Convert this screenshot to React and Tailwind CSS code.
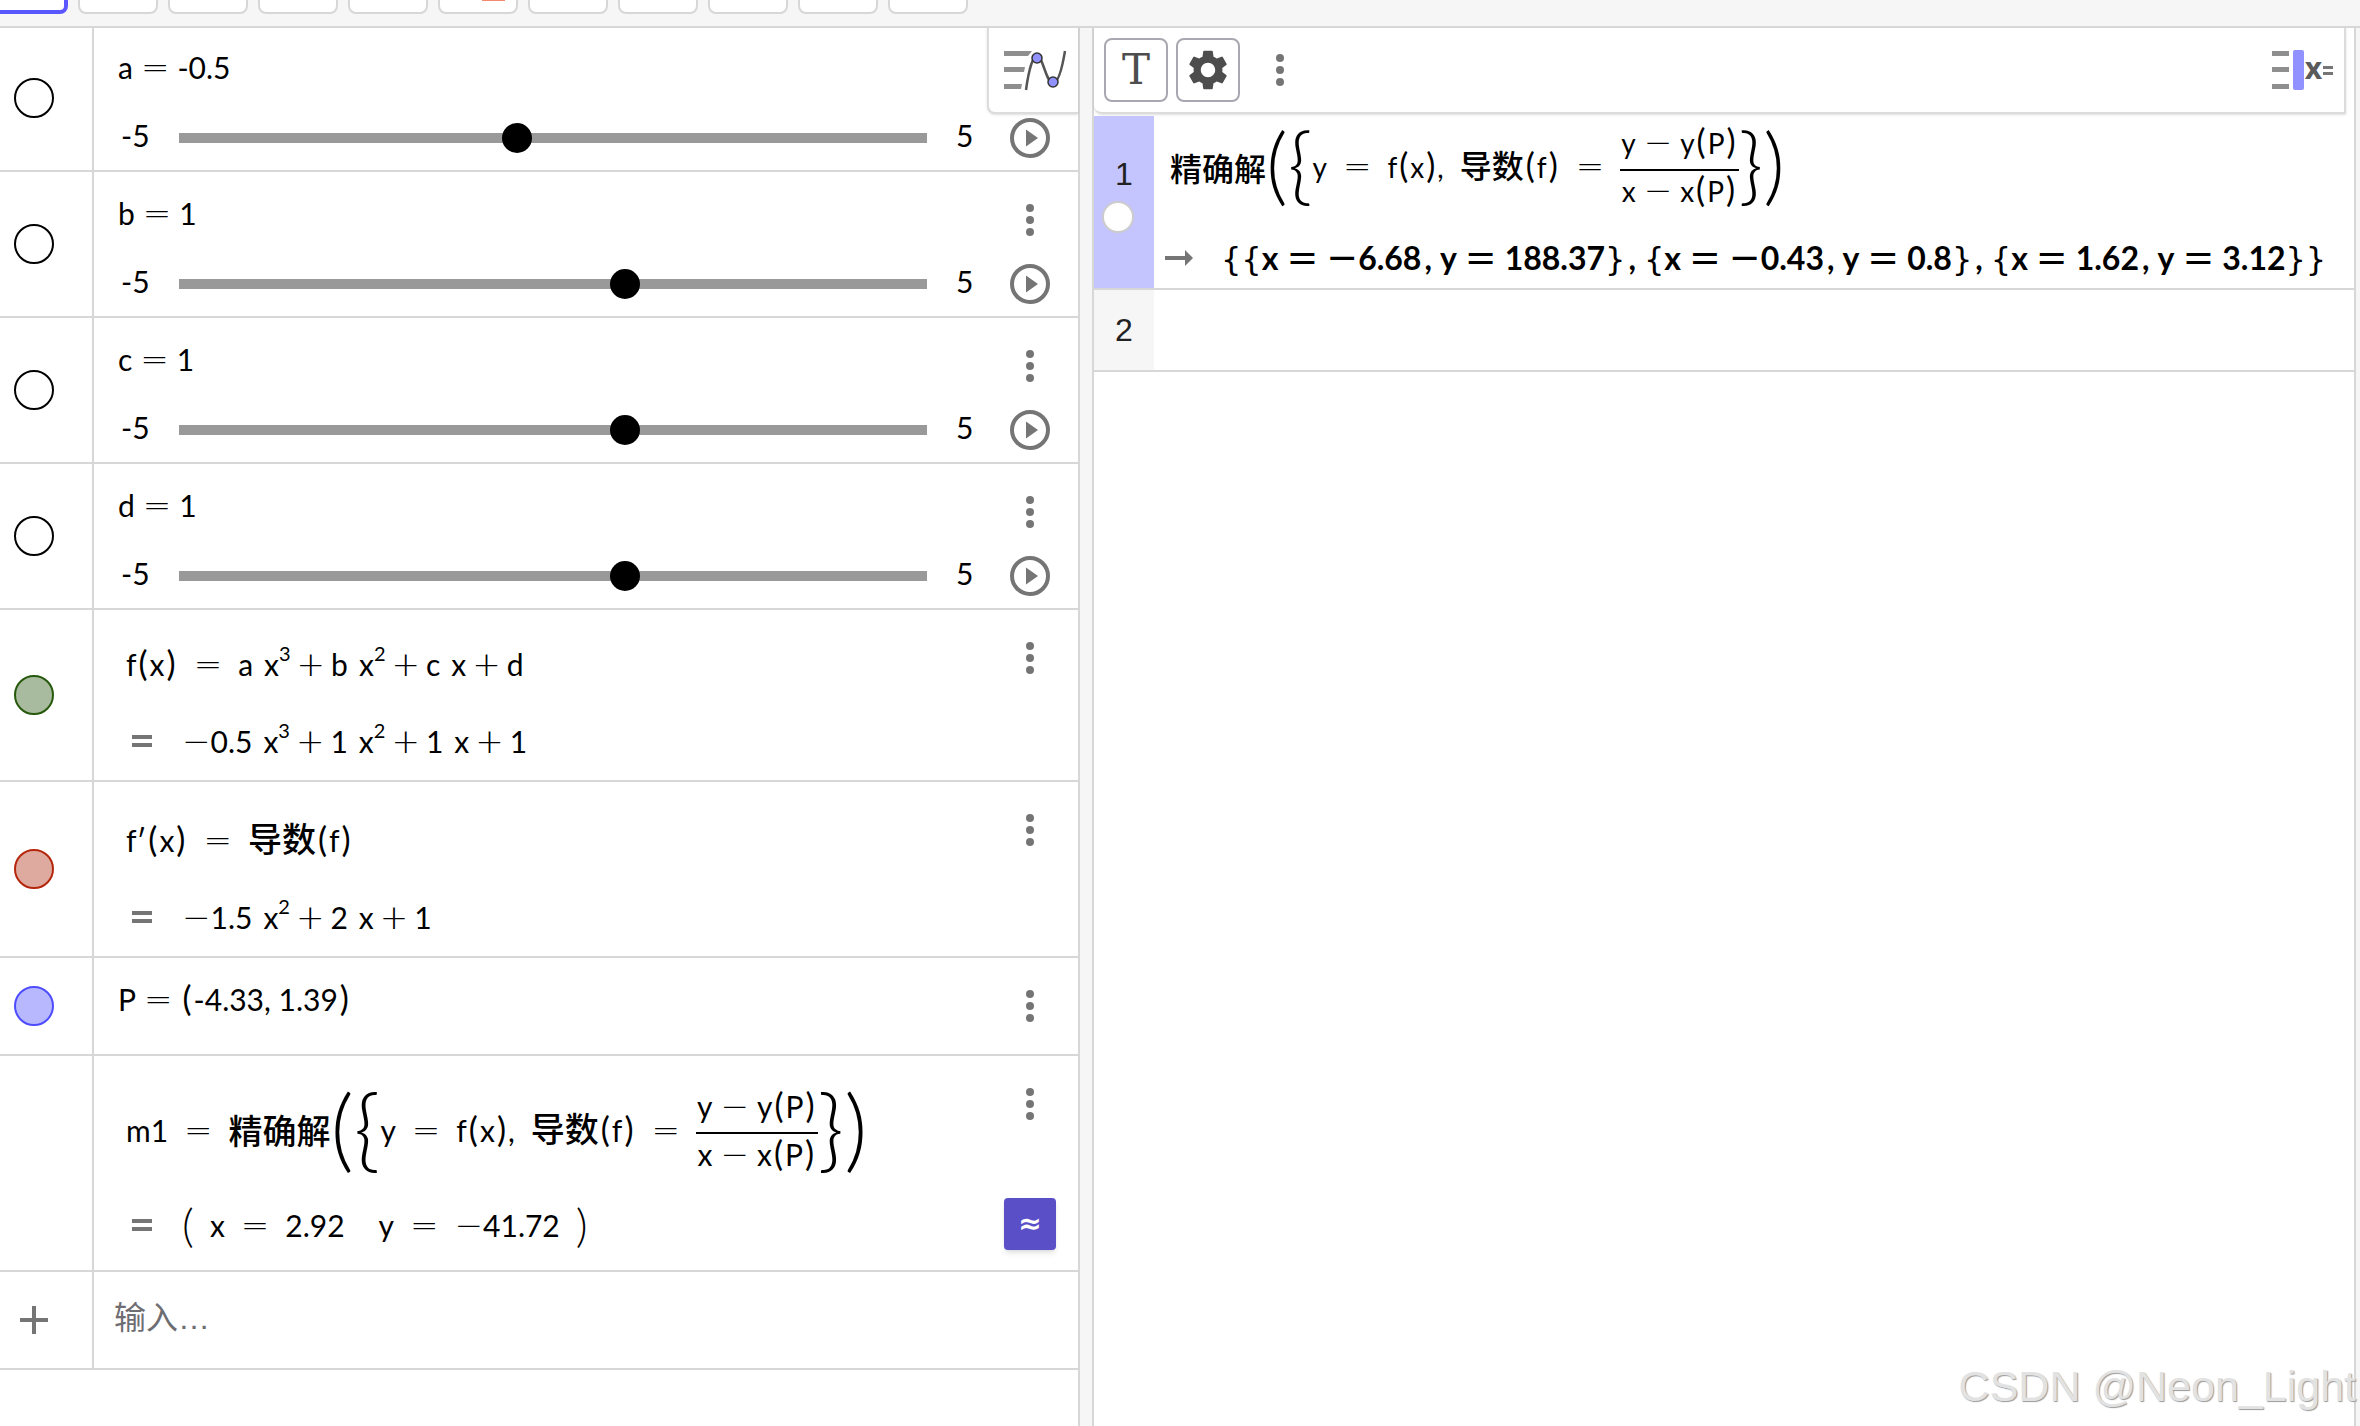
import React, { useState } from "react";
import { MdSettings } from "react-icons/md";

const SLIDERS = [
  { name: "a", initial: -0.5 },
  { name: "b", initial: 1 },
  { name: "c", initial: 1 },
  { name: "d", initial: 1 },
];

const TOOLS = ["point", "line", "perpendicular", "polygon", "circle", "ellipse", "angle", "reflect", "slider", "text"];

const CAS_RESULT = "{{x=−6.68,y=188.37},{x=−0.43,y=0.8},{x=1.62,y=3.12}}";

const MARBLE_COLORS = {
  empty: "border-black bg-white",
  green: "border-[#26590c] bg-[#a8bb9e]",
  red: "border-[#b5270c] bg-[#dea99e]",
  blue: "border-[#4d4dff] bg-[#b8b8ff]",
};

/* ---------- math pieces ---------- */

// leading-[0] keeps the bigger glyphs from stretching the line box

function Op({ children }) {
  return (
    <span className="mx-2 font-['DejaVu_Sans'] text-[34px] font-extralight leading-[0]">
      {children}
    </span>
  );
}

function Plus() {
  return (
    <span className="mx-[6px] font-['DejaVu_Sans'] text-[34px] font-extralight leading-[0]">
      +
    </span>
  );
}

function Eq() {
  return (
    <span className="mx-4 font-['DejaVu_Sans'] text-[34px] font-extralight leading-[0]">
      =
    </span>
  );
}

function Neg() {
  return (
    <span className="font-['DejaVu_Sans'] text-[34px] font-extralight leading-[0]">
      −
    </span>
  );
}

function Par({ children }) {
  return (
    <>
      <span className="mx-0.5 text-[34px] leading-[0]">(</span>
      {children}
      <span className="mx-0.5 text-[34px] leading-[0]">)</span>
    </>
  );
}

function Sup({ children }) {
  return (
    <sup className="static align-[15px] text-[20px] leading-[0]">
      {children}
    </sup>
  );
}

function Var({ children }) {
  return <span className="ml-[11px]">{children}</span>;
}

function Cjk({ children, small }) {
  return (
    <span
      className={`font-['Noto_Sans_CJK_SC'] font-medium leading-[0] ${
        small ? "text-[32px]" : "text-[34px]"
      }`}
    >
      {children}
    </span>
  );
}

function Delim({ children, small }) {
  return (
    <span
      className={`pb-2 font-light leading-none ${
        small ? "text-[84px]" : "text-[90px]"
      }`}
    >
      {children}
    </span>
  );
}

function Fraction({ top, bottom }) {
  return (
    <span className="flex flex-col items-center">
      <span className="border-b-2 border-black px-px pb-[6px]">{top}</span>
      <span>{bottom}</span>
    </span>
  );
}

function SolveFormula({ small }) {
  return (
    <>
      <Cjk small={small}>精确解</Cjk>
      <Delim small={small}>({"{"}</Delim>
      <span>
        y<Eq />f<Par>x</Par>,
      </span>
      <span className="ml-4">
        <Cjk small={small}>导数</Cjk>
        <Par>f</Par>
        <Eq />
      </span>
      <Fraction
        top={
          <>
            y<Op>−</Op>y<Par>P</Par>
          </>
        }
        bottom={
          <>
            x<Op>−</Op>x<Par>P</Par>
          </>
        }
      />
      <Delim small={small}>{"}"})</Delim>
    </>
  );
}

/* ---------- icons ---------- */

function MoreIcon() {
  return (
    <svg width="8" height="32" viewBox="0 0 8 32" fill="#757575">
      <circle cx="4" cy="4" r="4" />
      <circle cx="4" cy="16" r="4" />
      <circle cx="4" cy="28" r="4" />
    </svg>
  );
}

function PlayIcon() {
  return (
    <svg width="40" height="40" viewBox="0 0 40 40">
      <circle cx="20" cy="20" r="18" fill="none" stroke="#757575" strokeWidth="4" />
      <path d="M16 11.5 28 20 16 28.5z" fill="#757575" />
    </svg>
  );
}

function EqualsIcon() {
  return (
    <svg width="20" height="12" viewBox="0 0 20 12" fill="#757575">
      <path d="M0 0h20v4H0zM0 8h20v4H0z" />
    </svg>
  );
}

function AlgebraIcon() {
  return (
    <svg width="64" height="44" viewBox="0 0 64 44">
      <path d="M0 3h28l-4 5H0zM0 19h21l-1 5H0zM0 36h18l-1 5H0z" fill="#8f8f8f" />
      <path
        d="M22 42C25 20 29 8 33 8c6 0 9 27 16 27 5 0 9-14 12-32"
        fill="none"
        stroke="#555"
        strokeWidth="2.5"
      />
      <circle cx="33" cy="10" r="5" fill="#9191ff" stroke="#333" strokeWidth="1.5" />
      <circle cx="49" cy="34" r="5" fill="#9191ff" stroke="#333" strokeWidth="1.5" />
    </svg>
  );
}

function CasIcon() {
  return (
    <span className="flex items-center">
      <svg width="33" height="40" viewBox="0 0 33 40">
        <path d="M0 1h17v5H0zM0 17h17v5H0zM0 34h17v5H0z" fill="#8f8f8f" />
        <rect x="21" width="11" height="40" rx="2" fill="#9191ff" />
      </svg>
      <span className="pb-1 font-['Open_Sans'] text-[30px] font-bold leading-none text-[#5a5a5a]">x</span>
      <svg width="12" height="9" viewBox="0 0 12 9" fill="#757575">
        <path d="M1 0h10v3H1zM1 6h10v3H1z" />
      </svg>
    </span>
  );
}

/* ---------- algebra view ---------- */

function Row({ marble, children, side }) {
  return (
    <div className="flex border-b-2 border-[#d7d7d7]">
      <div className="flex w-[94px] shrink-0 items-center border-r-2 border-[#d7d7d7] pl-[14px]">
        {marble && (
          <button
            aria-label="toggle visibility"
            className={`size-10 rounded-full border-2 ${MARBLE_COLORS[marble]}`}
          />
        )}
      </div>
      <div className="min-w-0 flex-1">{children}</div>
      <div className="flex w-24 shrink-0 flex-col items-center pt-8">{side}</div>
    </div>
  );
}

function MoreButton() {
  return (
    <button aria-label="more">
      <MoreIcon />
    </button>
  );
}

function SliderRow({ name, initial, hideMore }) {
  const [value, setValue] = useState(initial);

  return (
    <Row
      marble="empty"
      side={
        <>
          <div className="h-8">{!hideMore && <MoreButton />}</div>
          <button aria-label={`play ${name}`} className="mt-7">
            <PlayIcon />
          </button>
        </>
      }
    >
      <div className="flex flex-col gap-[31px] pb-3 pl-6 pt-[21px]">
        <label htmlFor={`slider-${name}`}>
          {name}
          <Op>=</Op>
          {value}
        </label>
        <div className="flex h-10 items-center">
          <span className="w-[61px] pb-[6px] pl-[3px]">-5</span>
          <input
            id={`slider-${name}`}
            type="range"
            min="-5"
            max="5"
            step="0.1"
            value={value}
            onChange={(e) => setValue(parseFloat(e.target.value))}
            className="h-[30px] min-w-0 flex-1 appearance-none bg-[linear-gradient(#999,#999)] bg-size-[100%_10px] bg-center bg-no-repeat [&::-webkit-slider-thumb]:size-[30px] [&::-webkit-slider-thumb]:appearance-none [&::-webkit-slider-thumb]:rounded-full [&::-webkit-slider-thumb]:bg-black"
          />
          <span className="w-[55px] pb-[6px] pl-[29px]">5</span>
        </div>
      </div>
    </Row>
  );
}

function Output({ children }) {
  return (
    <div className="flex items-center gap-[30px] pl-[6px]">
      <EqualsIcon />
      <div>{children}</div>
    </div>
  );
}

function AlgebraView() {
  return (
    <section className="relative border-r-2 border-[#d7d7d7] bg-white">
      {SLIDERS.map((slider, index) => (
        <SliderRow key={slider.name} {...slider} hideMore={index === 0} />
      ))}

      <Row marble="green" side={<MoreButton />}>
        <div className="flex flex-col gap-[37px] pb-[19px] pl-8 pt-[34px]">
          <div>
            f<Par>x</Par>
            <Eq />a<Var>x</Var>
            <Sup>3</Sup>
            <Plus />b<Var>x</Var>
            <Sup>2</Sup>
            <Plus />c<Var>x</Var>
            <Plus />d
          </div>
          <Output>
            <Neg />
            0.5<Var>x</Var>
            <Sup>3</Sup>
            <Plus />1<Var>x</Var>
            <Sup>2</Sup>
            <Plus />1<Var>x</Var>
            <Plus />1
          </Output>
        </div>
      </Row>

      <Row marble="red" side={<MoreButton />}>
        <div className="flex flex-col gap-[37px] pb-[19px] pl-8 pt-[38px]">
          <div>
            f′<Par>x</Par>
            <Eq />
            <Cjk>导数</Cjk>
            <Par>f</Par>
          </div>
          <Output>
            <Neg />
            1.5<Var>x</Var>
            <Sup>2</Sup>
            <Plus />2<Var>x</Var>
            <Plus />1
          </Output>
        </div>
      </Row>

      <Row marble="blue" side={<MoreButton />}>
        <div className="pb-[35px] pl-6 pt-[21px]">
          P<Op>=</Op>
          <Par>-4.33, 1.39</Par>
        </div>
      </Row>

      <Row
        side={
          <>
            <MoreButton />
            <button
              aria-label="toggle symbolic"
              className="mb-5 mt-auto size-[52px] rounded bg-[#5b4fc8] font-['DejaVu_Sans'] text-[28px] font-bold text-white shadow-md"
            >
              ≈
            </button>
          </>
        }
      >
        <div className="flex flex-col gap-[31px] pb-[25px] pl-8 pt-[30px]">
          <div className="flex h-[88px] items-center">
            <span>
              m1
              <Eq />
            </span>
            <SolveFormula />
          </div>
          <Output>
            <span className="align-[-5px] text-[46px] font-light leading-[0]">(</span>
            <span className="ml-4">
              x<Eq />
              2.92
            </span>
            <span className="ml-[34px] mr-4">
              y<Eq />
              <Neg />
              41.72
            </span>
            <span className="align-[-5px] text-[46px] font-light leading-[0]">)</span>
          </Output>
        </div>
      </Row>

      <div className="flex h-[98px] border-b-2 border-[#d7d7d7]">
        <div className="flex w-[94px] shrink-0 items-center border-r-2 border-[#d7d7d7] pl-5">
          <button aria-label="add">
            <svg width="28" height="28" viewBox="0 0 28 28" fill="#757575">
              <path d="M12 0h4v12h12v4H16v12h-4V16H0v-4h12z" />
            </svg>
          </button>
        </div>
        <input
          aria-label="输入"
          placeholder="输入…"
          className="min-w-0 flex-1 pb-1 pl-5 font-['Liberation_Sans','Noto_Sans_CJK_SC',sans-serif] text-[32px] outline-none placeholder:text-[#6e6d72]"
        />
      </div>

      <button
        aria-label="style bar"
        className="absolute right-0 top-0 flex h-[88px] w-[91px] items-center rounded-bl-lg border-b-2 border-l-2 border-[#dcdcdc] bg-white pl-[15px] pt-0.5 shadow"
      >
        <AlgebraIcon />
      </button>
    </section>
  );
}

/* ---------- CAS view ---------- */

function CasToken({ token }) {
  if (token === "=") {
    return <span className="mx-2 font-['DejaVu_Sans'] text-[38px] font-normal leading-[0]">=</span>;
  }
  if (token === "−") {
    return <span className="font-['DejaVu_Sans'] text-[38px] font-normal leading-[0]">−</span>;
  }
  if (token === "{" || token === "}") {
    return <span className="font-['DejaVu_Sans'] font-normal leading-[0]">{token}</span>;
  }
  if (token === ",") {
    return <span className="mr-2 ml-[3px]">,</span>;
  }
  return token;
}

function CasToolbar() {
  return (
    <div className="mr-2 flex h-[88px] items-center rounded-bl-lg border-b-2 border-r-2 border-[#dcdcdc] px-[10px] pt-0.5 text-[#4d4d4d] shadow">
      <button
        aria-label="text"
        className="size-16 rounded-lg border-2 border-[#a8a8b0] font-['DejaVu_Serif'] text-[42px] leading-none"
      >
        T
      </button>
      <button
        aria-label="settings"
        className="ml-2 flex size-16 items-center justify-center rounded-lg border-2 border-[#a8a8b0]"
      >
        <MdSettings size={48} />
      </button>
      <button aria-label="more" className="ml-9">
        <MoreIcon />
      </button>
      <button aria-label="style bar" className="ml-auto">
        <CasIcon />
      </button>
    </div>
  );
}

function CasView() {
  const tokens = CAS_RESULT.split(/([{}=−,])/).filter(Boolean);

  return (
    <section className="border-x-2 border-[#d7d7d7] bg-white">
      <CasToolbar />
      <div className="mt-0.5 flex border-b-2 border-[#d7d7d7]">
        <div className="flex w-[60px] shrink-0 flex-col items-center gap-[7px] bg-[#c4c4ff] pt-[38px] font-['Liberation_Sans'] text-[32px] text-[#222]">
          <span>1</span>
          <button
            aria-label="plot"
            className="mr-3 size-8 rounded-full border-2 border-[#ccc] bg-white"
          />
        </div>
        <div className="flex min-w-0 flex-col gap-[27px] pb-[10px] pt-[7px]">
          <div className="flex h-[88px] items-center pl-4 text-[28px]">
            <SolveFormula small />
          </div>
          <div className="flex items-center pl-[11px]">
            <svg width="28" height="16" viewBox="0 0 28 16" fill="#757575">
              <path d="M0 6h20V0l8 8-8 8v-6H0z" />
            </svg>
            <div className="ml-[28px] whitespace-nowrap text-[32px] font-bold">
              {tokens.map((token, index) => (
                <CasToken key={index} token={token} />
              ))}
            </div>
          </div>
        </div>
      </div>
      <div className="flex h-[82px] border-b-2 border-[#d7d7d7]">
        <label
          htmlFor="cas-2"
          className="flex w-[60px] shrink-0 items-center justify-center bg-[#f6f6f6] font-['Liberation_Sans'] text-[32px] text-[#222]"
        >
          2
        </label>
        <input id="cas-2" className="min-w-0 flex-1 px-4 outline-none" />
      </div>
    </section>
  );
}

export default function App() {
  return (
    <div className="relative flex min-h-screen flex-col overflow-hidden bg-[#f6f6f6] font-['Lato','Noto_Sans_CJK_SC',sans-serif] text-[30px] leading-[40px] text-black">
      <header className="relative z-10 flex h-7 shrink-0 items-end gap-[10px] overflow-hidden border-b-2 border-[#d7d7d7] bg-[#f6f6f6] pb-3">
        <button
          aria-label="move"
          className="-ml-3 size-20 shrink-0 rounded-lg border-4 border-[#5b57ff] bg-white"
        />
        {TOOLS.map((tool) => (
          <button
            key={tool}
            aria-label={tool}
            className="flex size-20 shrink-0 items-end rounded-lg border-2 border-[#d7d7d7] bg-white pb-[11px] pl-[42px]"
          >
            {tool === "circle" && (
              <svg width="23" height="10" fill="#f5876e">
                <rect width="23" height="10" />
              </svg>
            )}
          </button>
        ))}
      </header>
      <main className="-mt-0.5 grid flex-1 grid-cols-[minmax(0,1080fr)_minmax(0,1264fr)] gap-3 pr-1">
        <AlgebraView />
        <CasView />
      </main>
      <div className="pointer-events-none absolute bottom-[18px] right-1 font-['Liberation_Sans'] text-[43px] leading-none text-[#e2e2e2] [text-shadow:1px_1px_1px_#999]">
        CSDN @Neon_Light
      </div>
    </div>
  );
}
